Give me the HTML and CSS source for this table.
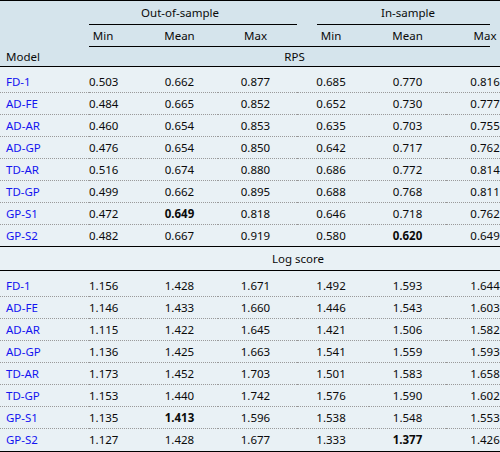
FILE: index.html
```html
<!DOCTYPE html>
<html>
<head>
<meta charset="utf-8">
<link rel="stylesheet" href="styles.css">
</head>
<body>
<table class="tbl">
  <colgroup>
    <col class="w-model"><col class="w-c1"><col class="w-c2"><col class="w-c3"><col class="w-c4"><col class="w-c5"><col class="w-c6">
  </colgroup>
  <thead>
    <tr class="h1">
      <th></th>
      <th colspan="3" class="grp-out">Out-of-sample</th>
      <th colspan="3" class="grp-in">In-sample</th>
    </tr>
    <tr class="h2">
      <th></th>
      <th class="c1 ul">Min</th><th class="c2 ul">Mean</th><th class="c3 ul">Max</th>
      <th class="c4 ul">Min</th><th class="c5 ul">Mean</th><th class="c6 ul ul-short">Max</th>
    </tr>
    <tr class="h3">
      <th class="model">Model</th>
      <th colspan="6" class="sect">RPS</th>
    </tr>
  </thead>
  <tbody>
    <tr class="first"><td class="model"><a>FD-1</a></td><td class="c1">0.503</td><td class="c2">0.662</td><td class="c3">0.877</td><td class="c4">0.685</td><td class="c5">0.770</td><td class="c6">0.816</td></tr>
    <tr><td class="model"><a>AD-FE</a></td><td class="c1">0.484</td><td class="c2">0.665</td><td class="c3">0.852</td><td class="c4">0.652</td><td class="c5">0.730</td><td class="c6">0.777</td></tr>
    <tr><td class="model"><a>AD-AR</a></td><td class="c1">0.460</td><td class="c2">0.654</td><td class="c3">0.853</td><td class="c4">0.635</td><td class="c5">0.703</td><td class="c6">0.755</td></tr>
    <tr><td class="model"><a>AD-GP</a></td><td class="c1">0.476</td><td class="c2">0.654</td><td class="c3">0.850</td><td class="c4">0.642</td><td class="c5">0.717</td><td class="c6">0.762</td></tr>
    <tr><td class="model"><a>TD-AR</a></td><td class="c1">0.516</td><td class="c2">0.674</td><td class="c3">0.880</td><td class="c4">0.686</td><td class="c5">0.772</td><td class="c6">0.814</td></tr>
    <tr><td class="model"><a>TD-GP</a></td><td class="c1">0.499</td><td class="c2">0.662</td><td class="c3">0.895</td><td class="c4">0.688</td><td class="c5">0.768</td><td class="c6">0.811</td></tr>
    <tr><td class="model"><a>GP-S1</a></td><td class="c1">0.472</td><td class="c2"><b>0.649</b></td><td class="c3">0.818</td><td class="c4">0.646</td><td class="c5">0.718</td><td class="c6">0.762</td></tr>
    <tr class="last"><td class="model"><a>GP-S2</a></td><td class="c1">0.482</td><td class="c2">0.667</td><td class="c3">0.919</td><td class="c4">0.580</td><td class="c5"><b>0.620</b></td><td class="c6">0.649</td></tr>
    <tr class="sect-row"><td></td><td colspan="6" class="sect">Log score</td></tr>
    <tr class="first"><td class="model"><a>FD-1</a></td><td class="c1">1.156</td><td class="c2">1.428</td><td class="c3">1.671</td><td class="c4">1.492</td><td class="c5">1.593</td><td class="c6">1.644</td></tr>
    <tr><td class="model"><a>AD-FE</a></td><td class="c1">1.146</td><td class="c2">1.433</td><td class="c3">1.660</td><td class="c4">1.446</td><td class="c5">1.543</td><td class="c6">1.603</td></tr>
    <tr><td class="model"><a>AD-AR</a></td><td class="c1">1.115</td><td class="c2">1.422</td><td class="c3">1.645</td><td class="c4">1.421</td><td class="c5">1.506</td><td class="c6">1.582</td></tr>
    <tr><td class="model"><a>AD-GP</a></td><td class="c1">1.136</td><td class="c2">1.425</td><td class="c3">1.663</td><td class="c4">1.541</td><td class="c5">1.559</td><td class="c6">1.593</td></tr>
    <tr><td class="model"><a>TD-AR</a></td><td class="c1">1.173</td><td class="c2">1.452</td><td class="c3">1.703</td><td class="c4">1.501</td><td class="c5">1.583</td><td class="c6">1.658</td></tr>
    <tr><td class="model"><a>TD-GP</a></td><td class="c1">1.153</td><td class="c2">1.440</td><td class="c3">1.742</td><td class="c4">1.576</td><td class="c5">1.590</td><td class="c6">1.602</td></tr>
    <tr><td class="model"><a>GP-S1</a></td><td class="c1">1.135</td><td class="c2"><b>1.413</b></td><td class="c3">1.596</td><td class="c4">1.538</td><td class="c5">1.548</td><td class="c6">1.553</td></tr>
    <tr class="last end"><td class="model"><a>GP-S2</a></td><td class="c1">1.127</td><td class="c2">1.428</td><td class="c3">1.677</td><td class="c4">1.333</td><td class="c5"><b>1.377</b></td><td class="c6">1.426</td></tr>
  </tbody>
</table>
</body>
</html>
```
FILE: styles.css
```css
html, body {
  margin: 0;
  padding: 0;
  background: #e9f1f5;
}
body {
  width: 500px;
  height: 452px;
  overflow: hidden;
  font-family: "Noto Sans", "Open Sans", sans-serif;
  font-size: 11.5px;
  color: #0a0a0a;
}
.tbl {
  width: 500px;
  table-layout: fixed;
  border-collapse: separate;
  border-spacing: 0;
  border-top: 1px solid #000;
}
.w-model { width: 89px; }
.w-c1 { width: 52px; }
.w-c2 { width: 77px; }
.w-c3 { width: 79px; }
.w-c4 { width: 72px; }
.w-c5 { width: 77px; }
.w-c6 { width: 54px; }

th, td {
  box-sizing: border-box;
  padding: 0;
  text-align: center;
  font-weight: normal;
  line-height: 14px;
  white-space: nowrap;
  vertical-align: middle;
}
thead th { background-color: #d5e4ec; }

.c1 { padding-right: 24px; }
.c3 { padding-right: 4px; }
.c4 { padding-right: 4px; }
.c6 { padding-left: 24px; }

.h1 th { height: 24px; padding-bottom: 1px; }
.grp-out {
  padding-right: 26px;
  background: linear-gradient(#000, #000) 0 100% / 100% 1px no-repeat, #d5e4ec;
}
.grp-in {
  padding-left: 19px;
  background: linear-gradient(#000, #000) 20px 100% / 173px 1px no-repeat, #d5e4ec;
}
.h2 th { height: 22px; }
.h2 th.ul {
  background: linear-gradient(#000, #000) 0 100% / 100% 1px no-repeat, #d5e4ec;
}
.h2 th.ul-short {
  background: linear-gradient(#000, #000) 0 100% / 44px 1px no-repeat, #d5e4ec;
}
.h3 th {
  height: 20px;
  border-bottom: 1px solid #000;
}
.model {
  text-align: left;
  padding-left: 6px;
}

td {
  height: 22px;
  border-bottom: 1px dotted #9a9a9a;
}
tr.first td {
  padding-top: 4px;
  height: 26px;
}
tr.last td {
  border-bottom: 1px solid #000;
  height: 22px;
}
tr.end td { height: 23px; padding-bottom: 1px; }
tr.sect-row td {
  height: 24px;
  border-bottom: 1px solid #000;
}
tr.sect-row td.sect { padding-left: 7px; }
td a {
  color: #1414f0;
  text-decoration: none;
}
td b { font-weight: bold; }
```
